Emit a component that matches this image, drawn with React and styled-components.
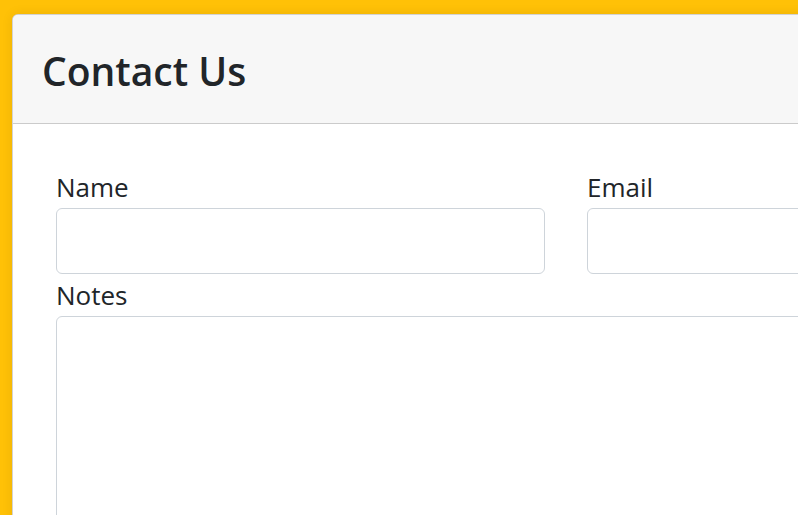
import React from 'react'
import styled, { createGlobalStyle } from 'styled-components'

const GlobalStyle = createGlobalStyle`
	html, body {
		margin: 0;
		padding: 0;
		background: #ffc107;
		overflow: hidden;
		font-family: 'Open Sans', 'Noto Sans', sans-serif;
		color: #212529;
	}
`

const Page = styled.div`
	padding: 14px 0 0 12px;
	height: 515px;
	box-sizing: border-box;
`

const Card = styled.div`
	width: 1130px;
	background: #fff;
	border: 1px solid rgba(0, 0, 0, 0.175);
	border-radius: 6px;
	box-shadow: 0 0 12px rgba(0, 0, 0, 0.08);
	overflow: hidden;
`

const Header = styled.div`
	height: 109px;
	box-sizing: border-box;
	padding: 4px 29px 0;
	display: flex;
	align-items: center;
	background: #f7f7f7;
	border-bottom: 1px solid rgba(0, 0, 0, 0.175);
`

const Title = styled.h1`
	margin: 0;
	font-size: 39px;
	font-weight: 600;
	line-height: 1.2;
`

const Body = styled.div`
	padding: 42px 43px 40px;
`

const Row = styled.div`
	display: grid;
	grid-template-columns: 489px 489px;
	column-gap: 42px;
`

const Field = styled.div`
	display: flex;
	flex-direction: column;
	grid-column: ${(p) => (p.$wide ? '1 / -1' : 'auto')};
`

const Label = styled.label`
	font-size: 26px;
	line-height: 42px;
`

const Input = styled.input`
	height: 66px;
	box-sizing: border-box;
	border: 1px solid #ced4da;
	border-radius: 6px;
	font: inherit;
	padding: 0 18px;
`

const TextArea = styled.textarea`
	height: 260px;
	box-sizing: border-box;
	border: 1px solid #ced4da;
	border-radius: 6px;
	font: inherit;
	padding: 12px 18px;
	resize: none;
`

const App = () => (
	<Page>
		<GlobalStyle />
		<Card>
			<Header>
				<Title>Contact Us</Title>
			</Header>
			<Body>
				<Row>
					<Field>
						<Label>Name</Label>
						<Input type="text" />
					</Field>
					<Field>
						<Label>Email</Label>
						<Input type="email" />
					</Field>
					<Field $wide>
						<Label>Notes</Label>
						<TextArea />
					</Field>
				</Row>
			</Body>
		</Card>
	</Page>
)

export default App
